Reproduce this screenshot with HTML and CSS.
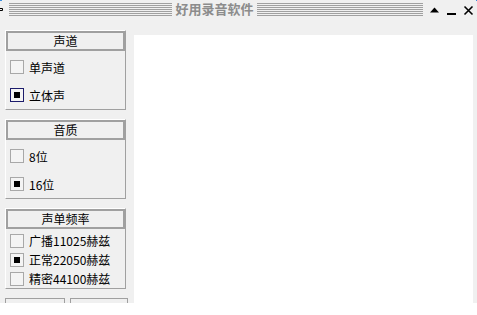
FILE: index.html
```html
<!DOCTYPE html>
<html>

<head>
    <meta charset="UTF-8">
    <title>好用录音软件</title>
    <link rel="stylesheet" href="styles.css">
</head>

<body>
    <div class='window'>
        <div class='titlebar'>
            <svg class='mark' width='9' height='19' viewBox='0 0 9 19'>
                <rect x='0' y='0' width='2' height='1' fill='#3c8ede' />
                <path d='M0 8.5h2.5v2h-2.5' fill='none' stroke='#000' stroke-width='1' />
            </svg>
            <div class='stripes left'></div>
            <div class='caption'>好用录音软件</div>
            <div class='stripes right'></div>
            <svg class='controls' width='54' height='19' viewBox='0 0 54 19'>
                <path d='M7 12.5h9l-4.5-5z' fill='#000' />
                <rect x='24' y='13' width='9' height='2' fill='#000' />
                <path d='M41.5 6.5l8 8M49.5 6.5l-8 8' stroke='#000' stroke-width='1.6' />
                <rect x='53' y='0' width='1' height='1' fill='#3c8ede' />
            </svg>
        </div>
        <div class='content'>
            <div class='side'>
                <div class='group'>
                    <div class='head'>声道</div>
                    <div class='rows tall'>
                        <div class='row'><span class='check'></span>单声道</div>
                        <div class='row'><span class='check on focus'></span>立体声</div>
                    </div>
                </div>
                <div class='group'>
                    <div class='head'>音质</div>
                    <div class='rows tall'>
                        <div class='row'><span class='check'></span>8位</div>
                        <div class='row'><span class='check on'></span>16位</div>
                    </div>
                </div>
                <div class='group'>
                    <div class='head'>声单频率</div>
                    <div class='rows short'>
                        <div class='row'><span class='check'></span>广播11025赫兹</div>
                        <div class='row'><span class='check on'></span>正常22050赫兹</div>
                        <div class='row'><span class='check'></span>精密44100赫兹</div>
                    </div>
                </div>
                <div class='buttons'>
                    <div class='btn one'></div>
                    <div class='btn two'></div>
                </div>
            </div>
            <div class='view'></div>
        </div>
    </div>
</body>

</html>
```

FILE: styles.css
```css
html,
body {
    padding: 0;
    margin: 0;
    background: #fff;
    user-select: none;
}

.window {
    width: 477px;
    height: 303px;
    overflow: hidden;
    background: #f0f0f0;
    font-family: "Noto Sans CJK SC", "DejaVu Sans", sans-serif;
    font-size: 12px;
    color: #000;
}

.titlebar {
    height: 19px;
    display: flex;
    align-items: flex-start;
}

.mark {
    display: block;
    flex: none;
}

.stripes {
    height: 13px;
    margin-top: 3px;
    background: repeating-linear-gradient(#a0a0a0 0 1px, #f0f0f0 1px 2px);
    flex: none;
}

.stripes.left {
    width: 163px;
}

.stripes.right {
    width: 166px;
}

.caption {
    width: 85px;
    height: 19px;
    line-height: 18px;
    text-align: center;
    font-size: 13px;
    font-weight: bold;
    color: #8c8c8c;
    flex: none;
}

.controls {
    display: block;
    flex: none;
}

.content {
    display: flex;
    align-items: flex-start;
}

.side {
    width: 123px;
    margin: 11px 0 0 5px;
    flex: none;
}

.group {
    width: 119px;
    border: 1px solid;
    border-color: #fff #a0a0a0 #a0a0a0 #fff;
    margin-bottom: 9px;
}

.head {
    height: 16px;
    line-height: 16px;
    border: 2px solid #a0a0a0;
    text-align: center;
}

.rows {
    padding: 2px 0 0 4px;
}

.row {
    display: flex;
    align-items: center;
    white-space: nowrap;
}

.tall .row {
    height: 28px;
}

.short .row {
    height: 19px;
}

.check {
    width: 12px;
    height: 12px;
    border: 1px solid #a8a8a8;
    background: #f4f4f4;
    margin-right: 5px;
    display: flex;
    align-items: center;
    justify-content: center;
    flex: none;
}

.check.focus {
    border-color: #1c1c6c;
}

.check.on::after {
    content: '';
    width: 6px;
    height: 6px;
    background: #000;
}

.buttons {
    display: flex;
    gap: 5px;
    margin-top: 1px;
}

.btn {
    height: 22px;
    border: 1px solid #a0a0a0;
    background: #f0f0f0;
}

.btn.one {
    width: 58px;
}

.btn.two {
    width: 57px;
}

.view {
    width: 339px;
    height: 268px;
    margin: 16px 0 0 6px;
    background: #fff;
    flex: none;
}
```
